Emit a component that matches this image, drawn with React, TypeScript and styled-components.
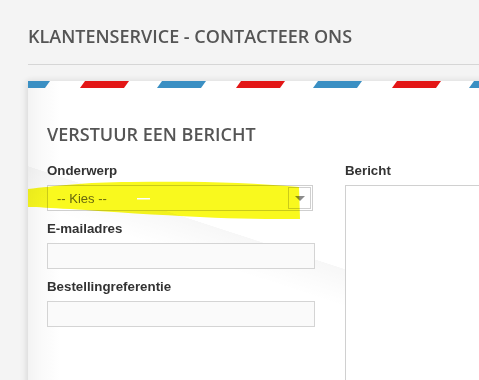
import React from "react";
import styled, { createGlobalStyle } from "styled-components";

const GlobalStyle = createGlobalStyle`
  html, body { margin: 0; padding: 0; }
  body {
    background: #f4f4f4;
    overflow: hidden;
    font-family: "Liberation Sans", Arial, sans-serif;
  }
`;

const Stage = styled.div`
  position: relative;
  width: 479px;
  height: 380px;
  overflow: hidden;
`;

const Page = styled.div`
  width: 680px;
  padding-left: 28px;
  box-sizing: border-box;
`;

const PageTitle = styled.h1`
  margin: 0;
  padding: 24px 0 16px;
  border-bottom: 1px solid #d6d6d6;
  font-family: "Open Sans", sans-serif;
  font-weight: 600;
  font-size: 18px;
  line-height: 24px;
  color: #555;
`;

const Card = styled.section`
  margin-top: 16px;
  width: 640px;
  height: 330px;
  background:
    linear-gradient(198deg, rgba(0,0,0,0) 50%, rgba(0,0,0,0.03) 50.1%, rgba(0,0,0,0) 59%) 0 0 / 400px 300px no-repeat,
    linear-gradient(to right, #f3f3f3 0, #fafafa 14px, #fff 32px);
  background-color: #fff;
  box-shadow: -3px 0 6px rgba(0, 0, 0, 0.07), 0 -2px 6px rgba(0, 0, 0, 0.04);
`;

const Stripe = styled.svg`
  display: block;
  width: 100%;
  height: 7px;
`;

const CardBody = styled.div`
  padding: 34px 19px 0;
`;

const CardHeading = styled.h2`
  margin: 0 0 17px;
  font-family: "Open Sans", sans-serif;
  font-weight: 600;
  font-size: 18px;
  line-height: 24px;
  color: #555;
`;

const Columns = styled.div`
  display: grid;
  grid-template-columns: 268px 268px;
  column-gap: 30px;
  align-items: start;
`;

const Column = styled.div`
  display: flex;
  flex-direction: column;
  gap: 10px;
`;

const Field = styled.div`
  display: flex;
  flex-direction: column;
`;

const Label = styled.label`
  display: block;
  margin-bottom: 6px;
  font-family: "Liberation Sans", Arial, sans-serif;
  font-weight: 700;
  font-size: 13.3px;
  line-height: 16px;
  color: #333;
`;

const SelectBox = styled.div`
  position: relative;
  box-sizing: border-box;
  width: 266px;
  height: 26px;
  border: 1px solid #cfcfcf;
  background: #fff;
  display: flex;
  align-items: center;
  padding-left: 9px;
`;

const SelectValue = styled.span`
  flex: 1;
  font-family: "Liberation Sans", Arial, sans-serif;
  font-size: 13px;
  color: #6a6a6a;
`;

const ArrowBox = styled.span`
  box-sizing: border-box;
  width: 23px;
  height: 22px;
  margin-right: 1px;
  border: 1px solid #cfcfcf;
  display: flex;
  align-items: center;
  justify-content: center;
  &::after {
    content: "";
    width: 0;
    height: 0;
    border-left: 5px solid transparent;
    border-right: 5px solid transparent;
    border-top: 5px solid #8c8c8c;
  }
`;

const TextInput = styled.div`
  box-sizing: border-box;
  width: 268px;
  height: 26px;
  border: 1px solid #d4d4d4;
  background: #fafafa;
`;

const TextArea = styled.div`
  box-sizing: border-box;
  width: 268px;
  height: 240px;
  border: 1px solid #d0d0d0;
  background: #fff;
`;

const Highlight = styled.svg`
  position: absolute;
  left: 0;
  top: 0;
  pointer-events: none;
`;

const Marker = styled.path`
  mix-blend-mode: multiply;
`;

export default function App() {
  return (
    <>
      <GlobalStyle />
      <Stage>
        <Page>
          <PageTitle>KLANTENSERVICE - CONTACTEER ONS</PageTitle>
          <Card>
            <Stripe>
              <defs>
                <pattern id="airmail" x="-27" y="0" width="156" height="7" patternUnits="userSpaceOnUse">
                  <polygon points="5,0 49,0 44,7 0,7" fill="#3a8fc3" />
                  <polygon points="84,0 128,0 123,7 79,7" fill="#e31616" />
                </pattern>
              </defs>
              <rect x="0" y="0" width="100%" height="7" fill="url(#airmail)" />
            </Stripe>
            <CardBody>
              <CardHeading>VERSTUUR EEN BERICHT</CardHeading>
              <Columns>
                <Column>
                  <Field>
                    <Label>Onderwerp</Label>
                    <SelectBox>
                      <SelectValue>-- Kies --</SelectValue>
                      <ArrowBox />
                    </SelectBox>
                  </Field>
                  <Field>
                    <Label>E-mailadres</Label>
                    <TextInput />
                  </Field>
                  <Field>
                    <Label>Bestellingreferentie</Label>
                    <TextInput />
                  </Field>
                </Column>
                <Column>
                  <Field>
                    <Label>Bericht</Label>
                    <TextArea />
                  </Field>
                </Column>
              </Columns>
            </CardBody>
          </Card>
        </Page>
        <Highlight width="479" height="380" viewBox="0 0 479 380">
          <Marker
            d="M28,189 C55,186 85,182 130,182 C190,181 250,182 299,187 L300,219 C270,219 240,219 200,217 C160,215 110,212 70,209 C50,208 38,207 28,207 Z"
            fill="#f9f91e"
          />
          <rect x="137" y="198" width="13" height="1.5" fill="#ffffff" />
        </Highlight>
      </Stage>
    </>
  );
}
